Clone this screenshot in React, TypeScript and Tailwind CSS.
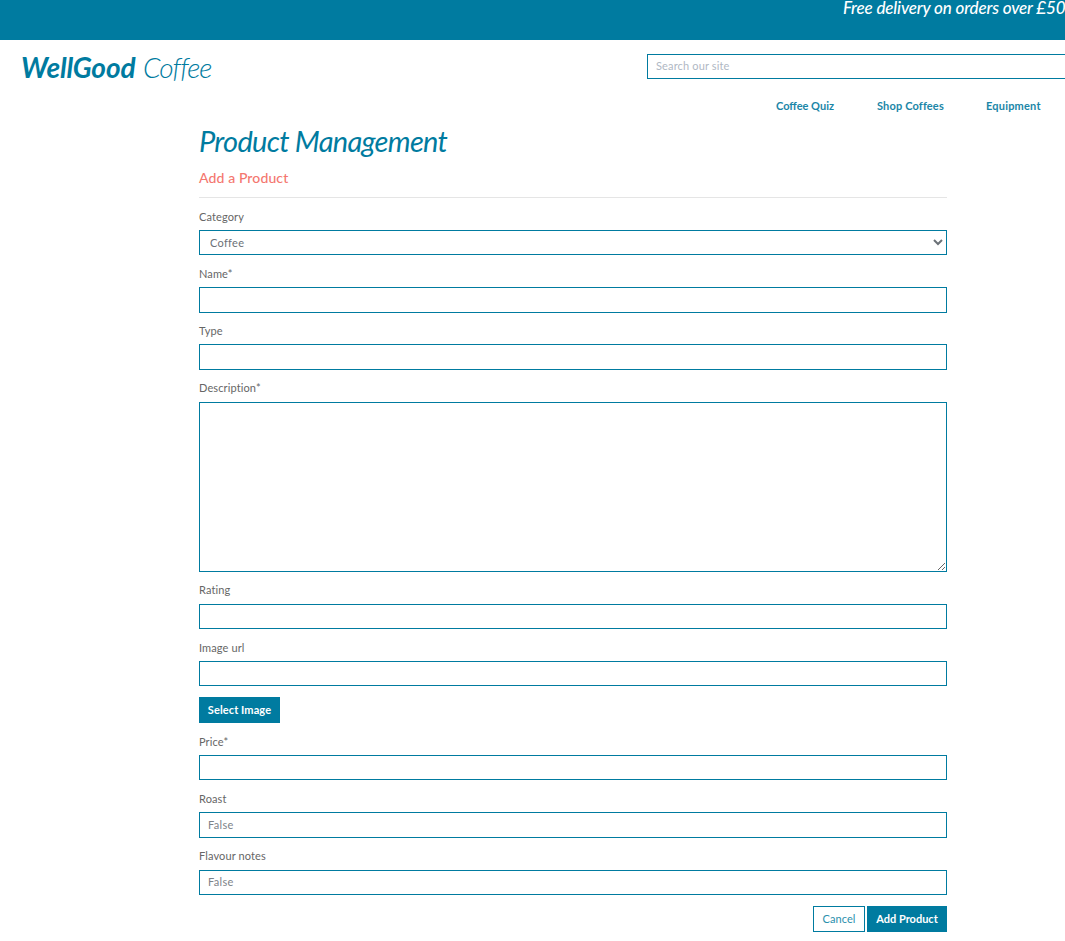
import type { ReactNode } from "react";

const control =
  "block w-full border border-[#007ba0] bg-white px-2 pb-0.5 text-[11px] text-[#495057] placeholder:text-[#7d8389] outline-none tracking-[0.3px]";

function Field({ label, spacing, children }: { label: string; spacing: string; children: ReactNode }) {
  return (
    <div>
      <label className={`block text-[11px] leading-4 tracking-[0.12px] text-[#666] ${spacing}`}>{label}</label>
      {children}
    </div>
  );
}

export default function App() {
  return (
    <div className="h-[941px] w-full overflow-hidden bg-white font-['Lato',sans-serif]">
      <div className="h-10 overflow-hidden bg-[#007ba0] pl-[843px]">
        <p className="-mt-1 text-[17px] leading-6 font-medium tracking-[-0.13px] whitespace-nowrap text-white italic">
          Free delivery on orders over £50
        </p>
      </div>

      <header className="flex h-[55px]">
        <a href="#" className="w-[647px] shrink-0 pt-[9px] pl-[21px] text-[28px] leading-9 whitespace-nowrap text-[#007ba0] italic">
          <span className="inline-block w-[122px] font-bold tracking-[-0.15px]">WellGood</span>
          <span className="font-light tracking-[-0.95px]">Coffee</span>
        </a>
        <input
          placeholder="Search our site"
          className="mt-3.5 h-[25px] w-[430px] shrink-0 border border-[#007ba0] px-2 pb-0.5 text-[11px] tracking-[0.15px] outline-none placeholder:text-[#b0b8c4]"
        />
      </header>

      <nav className="flex h-6 pl-[776px] text-[11px] leading-[22px] font-bold whitespace-nowrap text-[#1b86a7]">
        <a href="#" className="w-[101px]">Coffee Quiz</a>
        <a href="#" className="w-[109px] tracking-[0.15px]">Shop Coffees</a>
        <a href="#" className="tracking-[0.2px]">Equipment</a>
      </nav>

      <main className="ml-[199px] w-[748px]">
        <h1 className="h-[48px] pt-1 text-[29px] leading-9 font-normal tracking-[-0.7px] whitespace-nowrap text-[#007ba0] italic">
          Product Management
        </h1>
        <h2 className="h-[30px] text-[14px] leading-[22px] font-medium tracking-[0.12px] text-[#f4776f]">Add a Product</h2>
        <hr className="border-[#e5e5e5]" />

        <form>
          <Field label="Category" spacing="h-8 pt-[11px]">
            <select className="block h-[25px] w-full border border-[#007ba0] bg-white pr-px pl-1.5 text-[11px] tracking-[0.3px] text-[#6b7177] outline-none">
              <option>Coffee</option>
            </select>
          </Field>
          <Field label="Name*" spacing="h-8 pt-[11px]">
            <input className={`${control} h-[26px]`} />
          </Field>
          <Field label="Type" spacing="h-[31px] pt-2.5">
            <input className={`${control} h-[26px]`} />
          </Field>
          <Field label="Description*" spacing="h-8 pt-2.5">
            <textarea className={`${control} h-[170px] resize`} />
          </Field>
          <Field label="Rating" spacing="h-8 pt-2.5">
            <input className={`${control} h-[25px]`} />
          </Field>
          <Field label="Image url" spacing="h-8 pt-[11px]">
            <input className={`${control} h-[25px]`} />
          </Field>
          <button type="button" className="mt-[11px] block h-[26px] w-[81px] bg-[#007ba0] text-[11px] font-bold tracking-[0.1px] whitespace-nowrap text-white">
            Select Image
          </button>
          <Field label="Price*" spacing="h-8 pt-[11px]">
            <input className={`${control} h-[25px]`} />
          </Field>
          <Field label="Roast" spacing="h-8 pt-[11px]">
            <input placeholder="False" className={`${control} h-[26px]`} />
          </Field>
          <Field label="Flavour notes" spacing="h-8 pt-2.5">
            <input placeholder="False" className={`${control} h-[25px]`} />
          </Field>
          <div className="mt-[11px] flex justify-end gap-0.5 text-[11px]">
            <button type="button" className="h-[26px] w-[52px] border border-[#007ba0] tracking-[0.1px] text-[#2b8fad]">Cancel</button>
            <button type="button" className="h-[26px] w-20 bg-[#007ba0] font-bold whitespace-nowrap text-white">Add Product</button>
          </div>
        </form>
      </main>
    </div>
  );
}
